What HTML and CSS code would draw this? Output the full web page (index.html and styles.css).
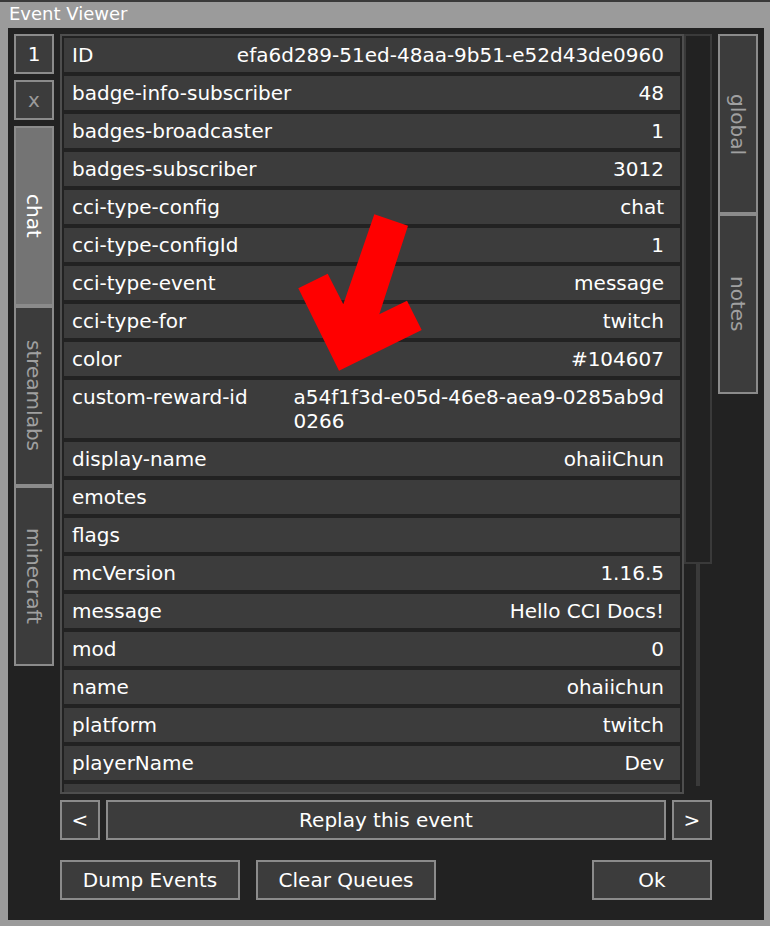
FILE: index.html
```html
<!DOCTYPE html>
<html>
<head>
<meta charset="utf-8">
<title>Event Viewer</title>
<link rel="stylesheet" href="styles.css">
</head>
<body>
<div class="topline"></div>
<div class="title">Event Viewer</div>
<div class="panel">
  <div class="main">
    <div class="leftcol">
      <div class="btn sq">1</div>
      <div class="btn sq disabled">x</div>
      <div class="tabs">
        <div class="tab selected"><span class="vt">chat</span></div>
        <div class="tab"><span class="vt">streamlabs</span></div>
        <div class="tab"><span class="vt">minecraft</span></div>
      </div>
    </div>
    <div class="center">
      <div class="list">
        <div class="row"><span>ID</span><span>efa6d289-51ed-48aa-9b51-e52d43de0960</span></div>
        <div class="row"><span>badge-info-subscriber</span><span>48</span></div>
        <div class="row"><span>badges-broadcaster</span><span>1</span></div>
        <div class="row"><span>badges-subscriber</span><span>3012</span></div>
        <div class="row"><span>cci-type-config</span><span>chat</span></div>
        <div class="row"><span>cci-type-configId</span><span>1</span></div>
        <div class="row"><span>cci-type-event</span><span>message</span></div>
        <div class="row"><span>cci-type-for</span><span>twitch</span></div>
        <div class="row"><span>color</span><span>#104607</span></div>
        <div class="row"><span>custom-reward-id</span><span class="multi">a54f1f3d-e05d-46e8-aea9-0285ab9d<br>0266</span></div>
        <div class="row"><span>display-name</span><span>ohaiiChun</span></div>
        <div class="row"><span>emotes</span><span></span></div>
        <div class="row"><span>flags</span><span></span></div>
        <div class="row"><span>mcVersion</span><span>1.16.5</span></div>
        <div class="row"><span>message</span><span>Hello CCI Docs!</span></div>
        <div class="row"><span>mod</span><span>0</span></div>
        <div class="row"><span>name</span><span>ohaiichun</span></div>
        <div class="row"><span>platform</span><span>twitch</span></div>
        <div class="row"><span>playerName</span><span>Dev</span></div>
        <div class="row empty"></div>
      </div>
      <div class="scroll">
        <div class="thumb"></div>
        <div class="track"></div>
      </div>
    </div>
    <div class="rightcol">
      <div class="tab"><span class="vt">global</span></div>
      <div class="tab"><span class="vt">notes</span></div>
    </div>
  </div>
  <div class="nav">
    <div class="btn sq">&lt;</div>
    <div class="btn wide">Replay this event</div>
    <div class="btn sq">&gt;</div>
  </div>
  <div class="actions">
    <div class="btn act">Dump Events</div>
    <div class="btn act">Clear Queues</div>
    <div class="btn ok">Ok</div>
  </div>
</div>
<svg class="arrow" width="140" height="175" viewBox="290 205 140 175">
  <polygon fill="#ff0000" points="374.3,214.3 408,225.7 379.3,314.3 407,300.7 421.7,330 339,370.7 298.3,288.3 327.7,273.7 343.3,304.3"/>
</svg>
</body>
</html>
```
FILE: styles.css
```css
* { box-sizing: border-box; }
html, body { margin: 0; padding: 0; }
body {
  width: 770px;
  height: 926px;
  background: #9b9b9b;
  font-family: "DejaVu Sans", sans-serif;
  font-size: 20px;
  color: #ffffff;
  position: relative;
  overflow: hidden;
}
.topline { height: 2px; background: #3a3a3a; }
.title {
  height: 26px;
  line-height: 24px;
  padding-left: 9px;
  font-size: 18px;
  color: #ffffff;
}
.panel {
  margin-left: 8px;
  width: 756px;
  height: 892px;
  background: #222222;
  padding: 6px;
}
.main { display: flex; gap: 6px; height: 760px; }
.leftcol { width: 40px; display: flex; flex-direction: column; gap: 6px; }
.btn {
  border: 2px solid #8b8b8b;
  background: #3c3c3c;
  display: flex;
  align-items: center;
  justify-content: center;
  color: #ffffff;
  height: 40px;
}
.sq { width: 40px; flex: none; }
.disabled { color: #9a9a9a; }
.tabs { display: flex; flex-direction: column; }
.tab {
  width: 40px;
  height: 180px;
  border: 2px solid #8b8b8b;
  background: #3c3c3c;
  color: #a0a0a0;
  display: flex;
  align-items: center;
  justify-content: center;
}
.tab.selected { background: #747474; color: #ffffff; }
.vt { writing-mode: vertical-rl; line-height: 24px; }
.center { display: flex; width: 652px; }
.list {
  width: 624px;
  height: 760px;
  border: 2px solid #4e4e4e;
  padding: 2px;
  overflow: hidden;
}
.row {
  display: flex;
  justify-content: space-between;
  background: #3c3c3c;
  padding: 5px 16px 5px 8px;
  line-height: 24px;
  margin-bottom: 4px;
  white-space: nowrap;
}
.row.empty { height: 34px; }
.multi { text-align: left; }
.scroll { width: 28px; display: flex; flex-direction: column; }
.thumb { height: 530px; border: 2px solid #3a3a3a; }
.track { width: 4px; height: 222px; margin-left: 12px; background: #3a3a3a; }
.rightcol { width: 40px; display: flex; flex-direction: column; }
.nav { display: flex; gap: 6px; margin-top: 6px; margin-left: 46px; width: 652px; }
.wide { flex: 1; }
.actions { display: flex; gap: 16px; margin-top: 20px; margin-left: 46px; width: 652px; }
.act { width: 180px; }
.ok { width: 120px; margin-left: auto; }
.arrow { position: absolute; left: 290px; top: 205px; }
```
